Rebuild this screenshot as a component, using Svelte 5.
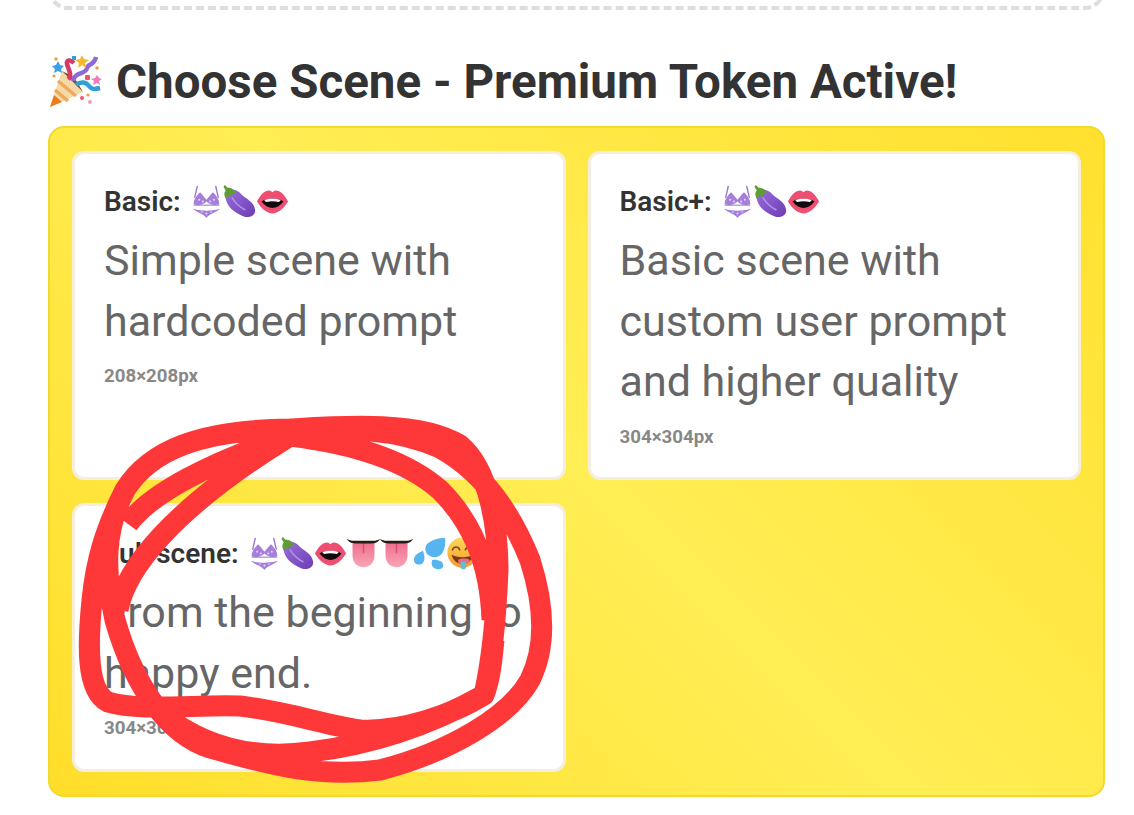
<script>
  const scenes = [
    { name: "Basic:", emoji: ["bikini", "eggplant", "mouth"], text: "Simple scene with hardcoded prompt", size: "208×208px" },
    { name: "Basic+:", emoji: ["bikini", "eggplant", "mouth"], text: "Basic scene with custom user prompt and higher quality", size: "304×304px" },
    { name: "Full scene:", emoji: ["bikini", "eggplant", "mouth", "tongue", "tongue", "drops", "drool"], text: "From the beginning to happy end.", size: "304×304px" },
  ];
</script>

<svg class="defs" width="0" height="0" aria-hidden="true">
  <defs>
    <linearGradient id="egg" x1="0" y1="0" x2="1" y2="1">
      <stop offset="0" stop-color="#9a6fdc" />
      <stop offset="1" stop-color="#6d3cb4" />
    </linearGradient>
    <linearGradient id="tong" x1="0" y1="0" x2="0" y2="1">
      <stop offset="0" stop-color="#ee6c8c" />
      <stop offset="1" stop-color="#f8a6b4" />
    </linearGradient>
    <linearGradient id="face" x1="0" y1="0" x2="0" y2="1">
      <stop offset="0" stop-color="#fdd85a" />
      <stop offset="1" stop-color="#f59a2c" />
    </linearGradient>
    <symbol id="bikini" viewBox="0 0 36 36">
      <path d="M8 1 C7 6 6 10 5 14 M28 1 C29 6 30 10 31 14" stroke="#9b74cf" stroke-width="1.500" fill="none" />
      <path d="M4 21 C4 15 8 11 11 8 C14 11 16 14 18 16 C20 14 22 11 25 8 C28 11 32 15 32 21 C26 23 21 21 18 18 C15 21 10 23 4 21 Z" fill="#a67fd9" />
      <path d="M4 22 L32 22" stroke="#8e66c6" stroke-width="1" />
      <path d="M3 26 C9 28 14 28 18 28 C22 28 27 28 33 26 C29 30 22 31 18 36 C14 31 7 30 3 26 Z" fill="#a67fd9" />
      <g fill="#e6d8f6">
        <circle cx="10" cy="16" r="1.100" /><circle cx="14" cy="18" r="1.100" /><circle cx="26" cy="16" r="1.100" /><circle cx="22" cy="18" r="1.100" />
        <circle cx="18" cy="31" r="1.100" /><circle cx="13" cy="29.500" r="0.900" /><circle cx="23" cy="29.500" r="0.900" />
      </g>
    </symbol>
    <symbol id="eggplant" viewBox="0 0 36 36">
      <path d="M3 9 C9 3 15 5 20 10 C25 15 34 18 35 27 C36 33 29 37 22 34 C12 30 1 22 3 9 Z" fill="url(#egg)" />
      <path d="M10 14 C13 19 18 24 24 27" stroke="#b196e6" stroke-width="1.600" fill="none" stroke-linecap="round" />
      <path d="M2 0 L5 3 C9 3 13 5 14 9 C11 9 10 10 9 13 C7 11 5 12 3 15 C1 11 1 8 3 6 L0.500 2 Z" fill="#5f9d32" />
    </symbol>
    <symbol id="mouth" viewBox="0 0 36 36">
      <path d="M1 18 C5 10 10 6 14 6 C16 6 17 7 18 8 C19 7 20 6 22 6 C26 6 31 10 35 18 C30 26 24 31 18 31 C12 31 6 26 1 18 Z" fill="#ec4f72" />
      <path d="M6 18 C11 14 25 14 30 18 C26 23 22 25 18 25 C14 25 10 23 6 18 Z" fill="#120a0c" />
      <path d="M9 16.500 C14 14.500 22 14.500 27 16.500 L25 18.500 C20 17.500 16 17.500 11 18.500 Z" fill="#fff" />
    </symbol>
    <symbol id="tongue" viewBox="0 0 36 36">
      <path d="M6 5 L6 20 C6 28 11 33 18 33 C25 33 30 28 30 20 L30 5 Z" fill="url(#tong)" />
      <path d="M18 7 L18 17" stroke="#d94f73" stroke-width="1.600" stroke-linecap="round" />
      <path d="M0 2 C4 5 8 4 12 4 L24 4 C28 4 32 5 36 2 C33 8 28 7 24 7 L12 7 C8 7 3 8 0 2 Z" fill="#2a1a16" />
    </symbol>
    <symbol id="drops" viewBox="0 0 36 36">
      <path d="M35 1 C36 11 33 22 23 22 C15 22 11 14 15 8 C20 3 28 1 35 1 Z" fill="#56b4ee" />
      <path d="M11 15 C12 20 14 23 11 28 C8 32 1 30 1 25 C1 20 6 17 11 15 Z" fill="#56b4ee" />
      <path d="M21 25 C26 24 34 26 33 32 C32 36 25 36 22 33 C20 31 20 28 21 25 Z" fill="#56b4ee" />
    </symbol>
    <symbol id="drool" viewBox="0 0 36 36">
      <circle cx="18" cy="17" r="16.500" fill="url(#face)" />
      <path d="M7 14 C9 10 13 10 15 14 M21 14 C23 10 27 10 29 14" stroke="#7a4a1a" stroke-width="1.700" fill="none" stroke-linecap="round" />
      <path d="M6 19 C12 23 24 23 30 19 C28 27 23 29 18 29 C13 29 8 27 6 19 Z" fill="#7a3a1a" />
      <path d="M13 25 C16 23 23 23 26 25 L24 29 L14 29 Z" fill="#ef6a86" />
      <path d="M16 27 L22 27 L22 33 C22 36 16 36 16 33 Z" fill="#5cc0d8" />
    </symbol>
    <symbol id="party" viewBox="0 0 52 54">
      <path d="M0 52 L12 16 L33 37 Z" fill="#f6d9a8" />
      <path d="M0 52 L4 40 L12 47 Z" fill="#ee7a1e" />
      <path d="M5 35 L18 46 M8 26 L26 41" stroke="#f2a85a" stroke-width="3.500" />
      <path d="M12 16 L33 37 L24 22 Z" fill="#7a4a24" />
      <path d="M18 24 C23 20 18 14 17 9 C16 5 20 4 24 8" stroke="#d83a66" stroke-width="4.500" fill="none" />
      <path d="M23 26 C25 16 36 20 37 13 C38 8 44 11 46 2" stroke="#8e6ad8" stroke-width="4.500" fill="none" />
      <path d="M26 30 C31 26 36 27 39 31 C42 35 46 34 50 33" stroke="#2f9fd8" stroke-width="4.500" fill="none" />
      <path d="M32 0 L34 4 L39 5 L35 8 L36 13 L32 10 L28 13 L29 8 L25 5 L30 4 Z" fill="#f6b82c" />
      <path d="M8 6 L10 10 L14 11 L11 14 L12 18 L8 16 L4 18 L5 14 L2 11 L6 10 Z" fill="#3aa0e8" />
      <path d="M47 20 L49 23 L52 24 L49 26 L50 30 L47 28 L43 30 L44 26 L41 24 L45 23 Z" fill="#ee7ac0" />
      <rect x="22" y="1" width="4" height="4" fill="#2f9fd8" />
      <circle cx="6" cy="4" r="1.800" fill="#e8a04a" />
      <circle cx="4" cy="21" r="1.600" fill="#e8a04a" />
      <circle cx="47" cy="13" r="1.800" fill="#e8a04a" />
      <rect x="35" y="20" width="5" height="5" rx="1" fill="#e8566a" />
      <circle cx="32" cy="43" r="2" fill="#e8566a" />
      <circle cx="38" cy="40" r="1.600" fill="#e8a04a" />
      <circle cx="40" cy="47" r="2" fill="#ee9ad0" />
    </symbol>
  </defs>
</svg>

<main class="page">
  <div class="upload"></div>

  <h2 class="heading">
    <svg class="party" aria-hidden="true"><use href="#party" /></svg>
    Choose Scene - Premium Token Active!
  </h2>

  <div class="panel">
    {#each scenes as scene}
      <div class="card">
        <div class="title">
          <span>{scene.name}</span>
          <span class="emojis">
            {#each scene.emoji as e}
              <svg class="emoji" aria-hidden="true"><use href={"#" + e} /></svg>
            {/each}
          </span>
        </div>
        <p class="desc">{scene.text}</p>
        <div class="size">{scene.size}</div>
      </div>
    {/each}
  </div>

  <!-- red marker scribbled on top of the screenshot -->
  <svg class="scribble" viewBox="0 0 1134 815" aria-hidden="true">
    <path d="M128 524 C150 494 210 462 290 436 C340 424 400 430 440 448 C480 470 510 510 530 560 C546 610 545 650 530 680 C510 716 450 752 380 770 C320 778 270 765 210 748 C170 735 135 690 115 620 C104 570 104 530 125 490 C150 450 200 430 290 429 C340 426 420 420 460 445 C490 470 498 530 498 570 C496 620 492 660 484 695 C450 716 400 732 360 730 C320 724 290 712 240 706 C200 704 140 712 108 702 C85 690 88 640 92 600 C96 560 105 530 125 490 M118 610 C125 570 170 510 290 436 C340 442 400 455 440 490 C470 520 490 560 492 620 M160 712 C200 745 250 760 310 752 C370 745 430 725 484 695 C490 680 492 660 494 640"
      fill="none" stroke="#fe3838" stroke-width="21" stroke-linejoin="round" />
  </svg>
</main>

<style>
  :global(body) {
    margin: 0;
    background: #fff;
    font-family: Roboto, "Liberation Sans", sans-serif;
  }

  .defs {
    position: absolute;
  }

  .page {
    position: relative;
    width: 1134px;
    height: 815px;
    overflow: hidden;
    padding: 0 29px 0 48px;
    box-sizing: border-box;
  }

  .upload {
    height: 100px;
    margin: -90px 0 0 0;
    border: 4px dashed #dedede;
    border-radius: 20px;
    box-sizing: border-box;
  }

  .heading {
    display: flex;
    align-items: center;
    gap: 14px;
    margin: 43px 0 15px;
    height: 58px;
    font-size: 47.500px;
    font-weight: 700;
    color: #333;
    white-space: nowrap;
  }

  .party {
    width: 52px;
    height: 54px;
    margin-left: 2px;
  }

  .panel {
    display: grid;
    grid-template-columns: 1fr 1fr;
    grid-template-rows: 329px 269px;
    gap: 23px 22px;
    height: 671px;
    padding: 23px 22px;
    box-sizing: border-box;
    border: 2px solid #f2d92c;
    border-radius: 16px;
    background: linear-gradient(45deg, #ffde2a, #ffee55 50%, #ffe02e);
  }

  .card {
    padding: 30px 29px;
    box-sizing: border-box;
    background: #fff;
    border: 3px solid #f3efdc;
    border-radius: 12px;
  }

  .title {
    display: flex;
    align-items: center;
    gap: 9px;
    height: 32px;
    margin-top: 1px;
    font-size: 28px;
    font-weight: 600;
    color: #333;
  }

  .emojis {
    display: flex;
  }

  .emoji {
    width: 33px;
    height: 33px;
  }

  .desc {
    margin: 13px 0 0;
    font-size: 43px;
    line-height: 60.500px;
    color: #666;
  }

  .size {
    margin-top: 14px;
    font-size: 18.700px;
    font-weight: 700;
    color: #888;
  }

  .scribble {
    position: absolute;
    left: 0;
    top: 0;
    width: 1134px;
    height: 815px;
  }
</style>
